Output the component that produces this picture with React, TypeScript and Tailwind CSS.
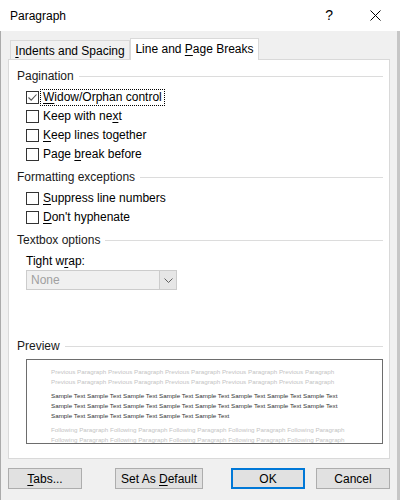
import React from "react";

// ─── Small pieces ───────────────────────────────────────────────────

function Mn({ children }: { children: React.ReactNode }) {
  return <span className="underline underline-offset-[2px] decoration-1">{children}</span>;
}

function SectionHead({ label }: { label: string }) {
  return (
    <div className="h-[18px] flex items-center text-[#1a1a1a]">
      <span className="whitespace-nowrap">{label}</span>
      <div className="flex-1 h-px bg-[#dcdcdc] ml-[5px]" />
    </div>
  );
}

function Check({
  checked,
  focused,
  children,
}: {
  checked?: boolean;
  focused?: boolean;
  children: React.ReactNode;
}) {
  return (
    <div className="h-[19px] flex items-center ml-[9px]">
      <div className="w-[13px] h-[13px] border border-[#333333] bg-white flex items-center justify-center shrink-0">
        {checked && (
          <svg width="11" height="11" viewBox="0 0 11 11">
            <path d="M1.5 5.5 L4.2 8.2 L9.5 2.5" fill="none" stroke="#555555" strokeWidth="1.1" />
          </svg>
        )}
      </div>
      <span
        className={
          "ml-[2px] px-[2px] leading-[15px] whitespace-nowrap " +
          (focused ? "outline outline-1 outline-dotted outline-black" : "")
        }
      >
        {children}
      </span>
    </div>
  );
}

function Btn({
  w,
  primary,
  children,
}: {
  w: string;
  primary?: boolean;
  children: React.ReactNode;
}) {
  return (
    <div
      className={
        "h-[21px] flex items-center justify-center bg-[#e1e1e1] " +
        w +
        (primary ? " border-2 border-[#0078d7]" : " border border-[#adadad]")
      }
    >
      {children}
    </div>
  );
}

// ─── Preview box ────────────────────────────────────────────────────

const prev = "Previous Paragraph ".repeat(5).trim();
const follow = "Following Paragraph ".repeat(5).trim();
const sample8 = "Sample Text ".repeat(8).trim();
const sample5 = "Sample Text ".repeat(5).trim();

function Preview() {
  return (
    <div className="ml-[9px] h-[85px] mt-[4px] border border-[#6d6d6d] bg-white overflow-hidden pl-[24px] pt-[7px] text-[6.25px] leading-[10px] whitespace-nowrap font-['Liberation_Sans',Arial,sans-serif]">
      <div className="text-[#c4c4c4]">
        <div>{prev}</div>
        <div>{prev}</div>
      </div>
      <div className="text-[#333333] mt-[4px]">
        <div>{sample8}</div>
        <div>{sample8}</div>
        <div>{sample5}</div>
      </div>
      <div className="text-[#c4c4c4] mt-[4px]">
        <div>{follow}</div>
        <div>{follow}</div>
      </div>
    </div>
  );
}

// ─── Dialog ─────────────────────────────────────────────────────────

export default function App() {
  return (
    <div className="w-[400px] h-[500px] bg-[#f0f0f0] flex flex-col text-[12px] text-black font-['Liberation_Sans',Arial,sans-serif] overflow-hidden">
      {/* title bar */}
      <div className="h-[31px] bg-white flex items-center pl-[10px] shrink-0">
        <span className="flex-1">Paragraph</span>
        <span className="text-[14px] mr-[37px]">?</span>
        <svg width="11" height="11" viewBox="0 0 11 11" className="mr-[19px]">
          <path d="M0.5 0.5 L10.5 10.5 M10.5 0.5 L0.5 10.5" stroke="#000" strokeWidth="1" />
        </svg>
      </div>

      <div className="flex-1 flex flex-col border-l border-l-[#ababab] border-r-[3px] border-r-[#c6c6c6] pl-[7px] pr-[7px] pt-[7px]">
        {/* tabs */}
        <div className="flex items-end h-[21px] relative z-10">
          <div className="ml-[2px] w-[120px] h-[19px] border border-b-0 border-[#d9d9d9] bg-[#f0f0f0] flex items-center justify-center pt-[1px]">
            <span>
              <Mn>I</Mn>ndents and Spacing
            </span>
          </div>
          <div className="w-[129px] h-[22px] -mb-px border border-b-0 border-[#d9d9d9] bg-white flex items-center justify-center pb-[1px]">
            <span>
              Line and <Mn>P</Mn>age Breaks
            </span>
          </div>
        </div>

        {/* tab page */}
        <div className="h-[400px] border border-[#d9d9d9] bg-white pl-[8px] pr-[6px] pt-[7px] flex flex-col">
          <SectionHead label="Pagination" />
          <div className="mt-[3px]">
            <Check checked focused>
              <Mn>W</Mn>idow/Orphan control
            </Check>
            <Check>
              Keep with ne<Mn>x</Mn>t
            </Check>
            <Check>
              <Mn>K</Mn>eep lines together
            </Check>
            <Check>
              Page <Mn>b</Mn>reak before
            </Check>
          </div>

          <div className="mt-[4px]">
            <SectionHead label="Formatting exceptions" />
          </div>
          <div className="mt-[3px]">
            <Check>
              <Mn>S</Mn>uppress line numbers
            </Check>
            <Check>
              <Mn>D</Mn>on't hyphenate
            </Check>
          </div>

          <div className="mt-[4px]">
            <SectionHead label="Textbox options" />
          </div>
          <div className="ml-[9px] mt-[3px] h-[18px] flex items-center">
            <span>
              Tight w<Mn>r</Mn>ap:
            </span>
          </div>
          <div className="ml-[9px] w-[151px] h-[20px] border border-[#cccccc] bg-[#f0f0f0] flex">
            <span className="flex-1 pl-[4px] leading-[18px] text-[#a0a0a0]">None</span>
            <div className="w-[17px] h-full border-l border-[#cccccc] bg-[#e6e6e6] flex items-center justify-center">
              <svg width="9" height="5" viewBox="0 0 9 5">
                <path d="M0.5 0.5 L4.5 4.5 L8.5 0.5" fill="none" stroke="#606060" strokeWidth="1" />
              </svg>
            </div>
          </div>

          <div className="mt-[47px]">
            <SectionHead label="Preview" />
          </div>
          <Preview />
        </div>

        {/* buttons */}
        <div className="flex mt-[9px]">
          <Btn w="w-[74px]">
            <span>
              <Mn>T</Mn>abs...
            </span>
          </Btn>
          <div className="ml-[33px]">
            <Btn w="w-[88px]">
              <span>
                Set As <Mn>D</Mn>efault
              </span>
            </Btn>
          </div>
          <div className="ml-auto">
            <Btn w="w-[74px]" primary>
              OK
            </Btn>
          </div>
          <div className="ml-[11px]">
            <Btn w="w-[74px]">Cancel</Btn>
          </div>
        </div>
      </div>
    </div>
  );
}
